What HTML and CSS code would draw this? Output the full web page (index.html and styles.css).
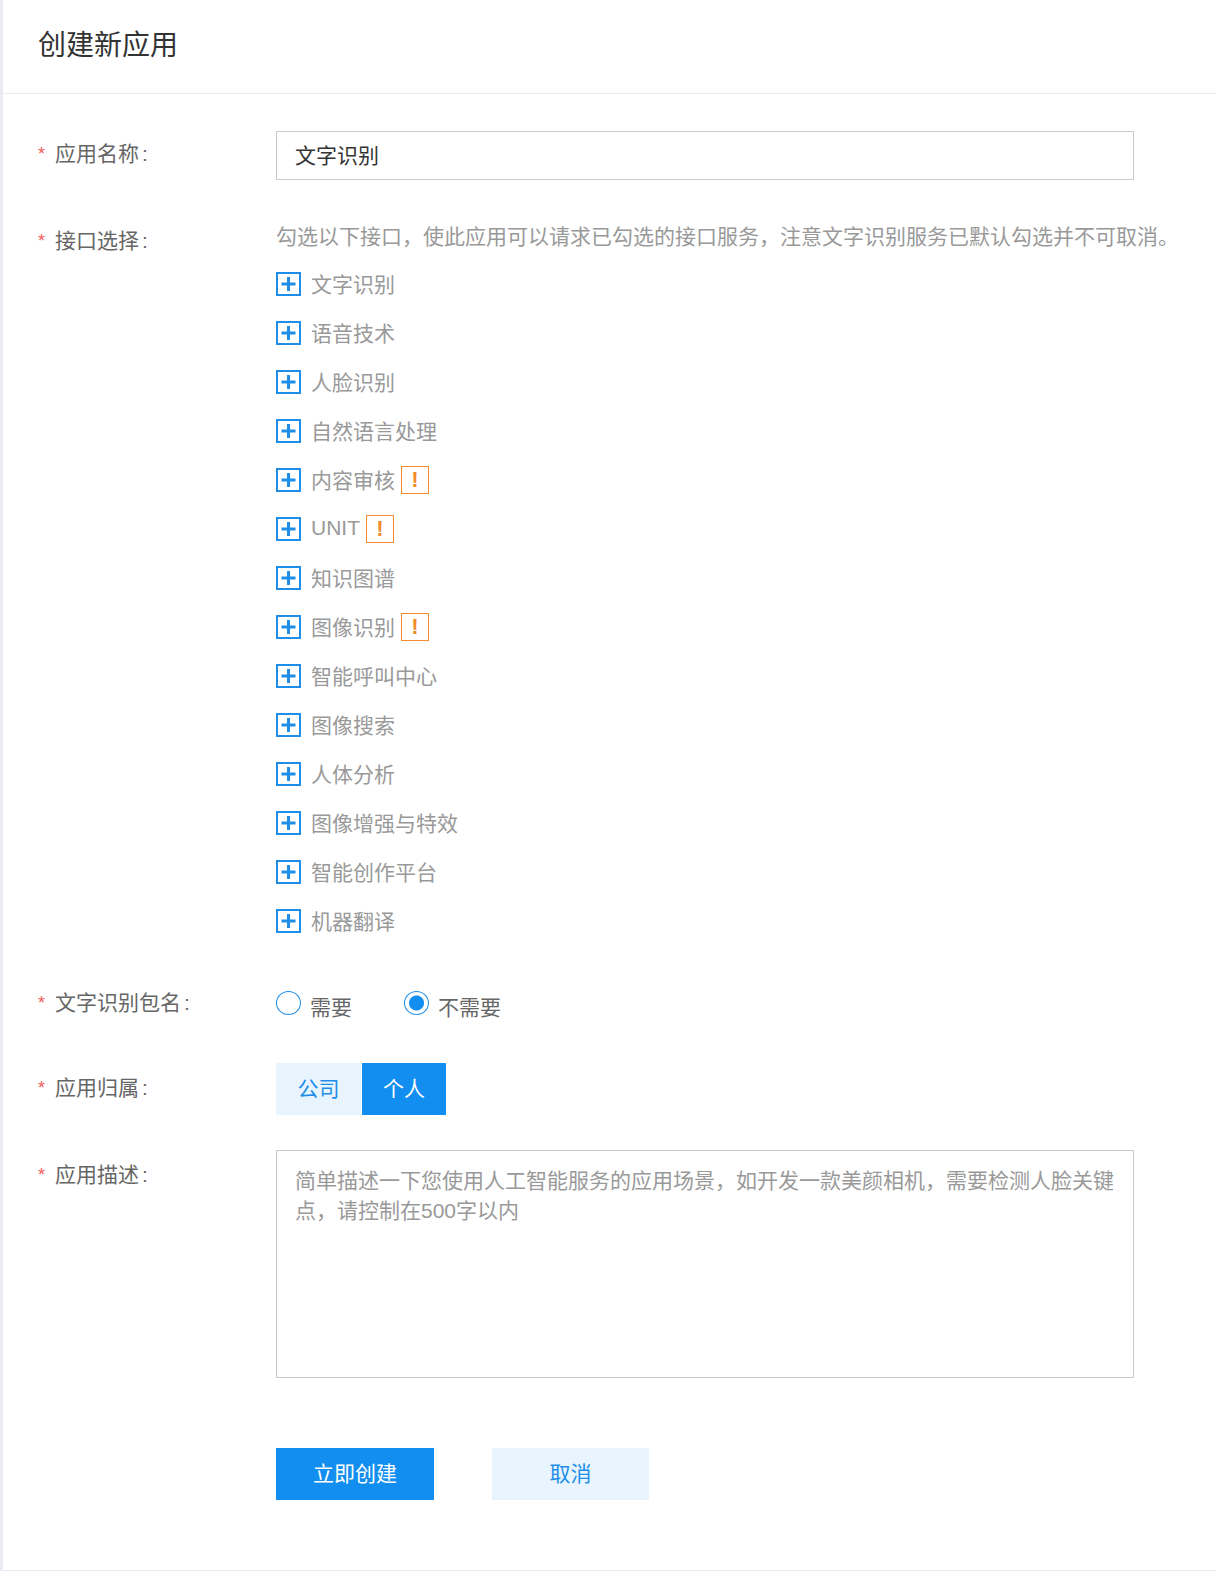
FILE: index.html
```html
<!DOCTYPE html>
<html lang="zh-CN">
<head>
<meta charset="utf-8">
<title>创建新应用</title>
<link rel="stylesheet" href="styles.css">
</head>
<body>
<main class="page">
  <header class="head"><h1 class="title">创建新应用</h1></header>
  <form class="form">
    <div class="row row-name">
      <label class="label"><span class="star">*</span>应用名称<span class="colon">:</span></label>
      <div class="input">文字识别</div>
    </div>
    <div class="row row-api">
      <label class="label"><span class="star">*</span>接口选择<span class="colon">:</span></label>
      <div class="field">
        <p class="hint">勾选以下接口，使此应用可以请求已勾选的接口服务，注意文字识别服务已默认勾选并不可取消。</p>
        <ul class="tree">
          <li class="item"><svg class="plus" viewBox="0 0 25 24"><rect x="1" y="1" width="23" height="22" fill="none" stroke="#1e8ee8" stroke-width="2"/><path d="M5.500 12h14M12.500 5v14" stroke="#1e8ee8" stroke-width="3" fill="none"/></svg><span>文字识别</span></li>
          <li class="item"><svg class="plus" viewBox="0 0 25 24"><rect x="1" y="1" width="23" height="22" fill="none" stroke="#1e8ee8" stroke-width="2"/><path d="M5.500 12h14M12.500 5v14" stroke="#1e8ee8" stroke-width="3" fill="none"/></svg><span>语音技术</span></li>
          <li class="item"><svg class="plus" viewBox="0 0 25 24"><rect x="1" y="1" width="23" height="22" fill="none" stroke="#1e8ee8" stroke-width="2"/><path d="M5.500 12h14M12.500 5v14" stroke="#1e8ee8" stroke-width="3" fill="none"/></svg><span>人脸识别</span></li>
          <li class="item"><svg class="plus" viewBox="0 0 25 24"><rect x="1" y="1" width="23" height="22" fill="none" stroke="#1e8ee8" stroke-width="2"/><path d="M5.500 12h14M12.500 5v14" stroke="#1e8ee8" stroke-width="3" fill="none"/></svg><span>自然语言处理</span></li>
          <li class="item"><svg class="plus" viewBox="0 0 25 24"><rect x="1" y="1" width="23" height="22" fill="none" stroke="#1e8ee8" stroke-width="2"/><path d="M5.500 12h14M12.500 5v14" stroke="#1e8ee8" stroke-width="3" fill="none"/></svg><span>内容审核</span><b class="warn">!</b></li>
          <li class="item"><svg class="plus" viewBox="0 0 25 24"><rect x="1" y="1" width="23" height="22" fill="none" stroke="#1e8ee8" stroke-width="2"/><path d="M5.500 12h14M12.500 5v14" stroke="#1e8ee8" stroke-width="3" fill="none"/></svg><span>UNIT</span><b class="warn">!</b></li>
          <li class="item"><svg class="plus" viewBox="0 0 25 24"><rect x="1" y="1" width="23" height="22" fill="none" stroke="#1e8ee8" stroke-width="2"/><path d="M5.500 12h14M12.500 5v14" stroke="#1e8ee8" stroke-width="3" fill="none"/></svg><span>知识图谱</span></li>
          <li class="item"><svg class="plus" viewBox="0 0 25 24"><rect x="1" y="1" width="23" height="22" fill="none" stroke="#1e8ee8" stroke-width="2"/><path d="M5.500 12h14M12.500 5v14" stroke="#1e8ee8" stroke-width="3" fill="none"/></svg><span>图像识别</span><b class="warn">!</b></li>
          <li class="item"><svg class="plus" viewBox="0 0 25 24"><rect x="1" y="1" width="23" height="22" fill="none" stroke="#1e8ee8" stroke-width="2"/><path d="M5.500 12h14M12.500 5v14" stroke="#1e8ee8" stroke-width="3" fill="none"/></svg><span>智能呼叫中心</span></li>
          <li class="item"><svg class="plus" viewBox="0 0 25 24"><rect x="1" y="1" width="23" height="22" fill="none" stroke="#1e8ee8" stroke-width="2"/><path d="M5.500 12h14M12.500 5v14" stroke="#1e8ee8" stroke-width="3" fill="none"/></svg><span>图像搜索</span></li>
          <li class="item"><svg class="plus" viewBox="0 0 25 24"><rect x="1" y="1" width="23" height="22" fill="none" stroke="#1e8ee8" stroke-width="2"/><path d="M5.500 12h14M12.500 5v14" stroke="#1e8ee8" stroke-width="3" fill="none"/></svg><span>人体分析</span></li>
          <li class="item"><svg class="plus" viewBox="0 0 25 24"><rect x="1" y="1" width="23" height="22" fill="none" stroke="#1e8ee8" stroke-width="2"/><path d="M5.500 12h14M12.500 5v14" stroke="#1e8ee8" stroke-width="3" fill="none"/></svg><span>图像增强与特效</span></li>
          <li class="item"><svg class="plus" viewBox="0 0 25 24"><rect x="1" y="1" width="23" height="22" fill="none" stroke="#1e8ee8" stroke-width="2"/><path d="M5.500 12h14M12.500 5v14" stroke="#1e8ee8" stroke-width="3" fill="none"/></svg><span>智能创作平台</span></li>
          <li class="item"><svg class="plus" viewBox="0 0 25 24"><rect x="1" y="1" width="23" height="22" fill="none" stroke="#1e8ee8" stroke-width="2"/><path d="M5.500 12h14M12.500 5v14" stroke="#1e8ee8" stroke-width="3" fill="none"/></svg><span>机器翻译</span></li>
        </ul>
      </div>
    </div>
    <div class="row row-pkg">
      <label class="label"><span class="star">*</span>文字识别包名<span class="colon">:</span></label>
      <div class="radios">
        <span class="radio"><i class="dot"></i><span class="radio-text">需要</span></span>
        <span class="radio"><i class="dot on"></i><span class="radio-text">不需要</span></span>
      </div>
    </div>
    <div class="row row-owner">
      <label class="label"><span class="star">*</span>应用归属<span class="colon">:</span></label>
      <div class="segs"><span class="seg">公司</span><span class="seg seg-on">个人</span></div>
    </div>
    <div class="row row-desc">
      <label class="label"><span class="star">*</span>应用描述<span class="colon">:</span></label>
      <div class="textarea">简单描述一下您使用人工智能服务的应用场景，如开发一款美颜相机，需要检测人脸关键点，请控制在500字以内</div>
    </div>
    <div class="actions">
      <span class="btn btn-primary">立即创建</span>
      <span class="btn btn-light">取消</span>
    </div>
  </form>
</main>
</body>
</html>
```
FILE: styles.css
```css
* { box-sizing: border-box; }
html, body { margin: 0; padding: 0; height: 100%; }
body {
  background: #e8ebf2;
  font-family: "Liberation Sans", "Noto Sans CJK SC", sans-serif;
  font-size: 21px;
  overflow: hidden;
}
.page {
  margin-left: 3px;
  height: 1570px;
  background: #fff;
}
.head {
  height: 94px;
  border-bottom: 1px solid #ebebeb;
  padding: 0 0 2px 35px;
  display: flex;
  align-items: center;
}
.title { margin: 0; font-size: 28px; font-weight: 400; color: #333; line-height: 40px; }
.form { padding-left: 35px; }
.row { display: flex; }
.label {
  width: 238px;
  flex: none;
  color: #666;
  line-height: 30px;
  display: flex;
}
.colon { padding-left: 3px; }
.star { color: #f25c5c; width: 17px; flex: none; font-size: 18px; }
.row-name { margin-top: 37px; }
.row-name .label { padding-top: 8px; }
.input {
  width: 858px;
  height: 49px;
  border: 1px solid #c9c9c9;
  padding-left: 18px;
  line-height: 48px;
  color: #333;
}
.row-api { margin-top: 41px; }
.row-api .label { padding-top: 5px; }
.field { flex: 1; min-width: 0; }
.hint { margin: 0; padding-top: 1px; height: 30px; color: #999; line-height: 30px; white-space: nowrap; }
.tree { list-style: none; margin: 7px 0 0; padding: 0; }
.item { height: 49px; display: flex; align-items: center; color: #999; }
.plus { width: 25px; height: 24px; margin: 3px 10px 0 0; flex: none; }
.warn {
  width: 28px;
  height: 28px;
  margin: 3px 0 0 6px;
  border: 1px solid #f38b2c;
  color: #f38b2c;
  font-size: 22px;
  font-weight: 700;
  text-align: center;
  line-height: 26px;
}
.row-pkg { margin-top: 43px; }
.row-pkg .label { padding-top: 1px; }
.radios { display: flex; gap: 52px; }
.radio { display: flex; color: #666; height: 30px; }
.dot {
  width: 25px;
  height: 24px;
  margin: 4px 9px 0 0;
  border: 1px solid #1e8ee8;
  border-radius: 50%;
  display: block;
}
.dot.on { background: radial-gradient(circle, #118ef0 0 7px, #fff 8px); }
.radio-text { line-height: 30px; padding-top: 6px; }
.row-owner { margin-top: 45px; }
.row-owner .label { padding-top: 10px; }
.segs { display: flex; gap: 1px; }
.seg {
  width: 85px;
  height: 52px;
  background: #e8f5fe;
  color: #1e8ee8;
  text-align: center;
  line-height: 52px;
}
.seg-on { width: 84px; background: #118ef0; color: #fff; }
.row-desc { margin-top: 35px; }
.row-desc .label { padding-top: 10px; }
.textarea {
  width: 858px;
  height: 228px;
  border: 1px solid #c9c9c9;
  padding: 15px 10px 0 18px;
  color: #999;
  line-height: 30px;
}
.actions { display: flex; gap: 58px; margin: 70px 0 0 238px; }
.btn { height: 52px; text-align: center; line-height: 52px; }
.btn-primary { width: 158px; background: #118ef0; color: #fff; }
.btn-light { width: 157px; background: #e8f5fe; color: #1e8ee8; }
```
